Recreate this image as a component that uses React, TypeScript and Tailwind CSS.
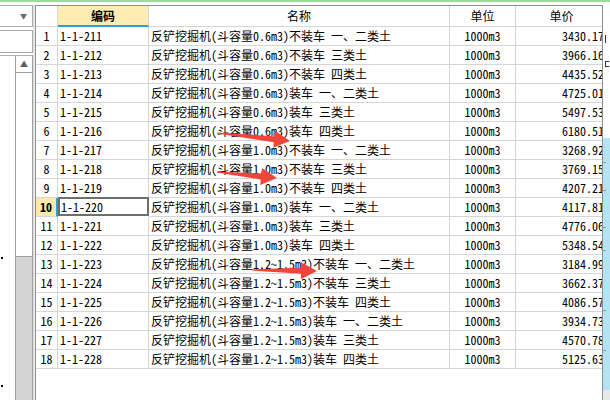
import React from 'react';

type Row = [string, string, string];

const rows: Row[] = [
  ['1-1-211', '反铲挖掘机(斗容量0.6m3)不装车 一、二类土', '3430.17'],
  ['1-1-212', '反铲挖掘机(斗容量0.6m3)不装车 三类土', '3966.16'],
  ['1-1-213', '反铲挖掘机(斗容量0.6m3)不装车 四类土', '4435.52'],
  ['1-1-214', '反铲挖掘机(斗容量0.6m3)装车 一、二类土', '4725.01'],
  ['1-1-215', '反铲挖掘机(斗容量0.6m3)装车 三类土', '5497.53'],
  ['1-1-216', '反铲挖掘机(斗容量0.6m3)装车 四类土', '6180.51'],
  ['1-1-217', '反铲挖掘机(斗容量1.0m3)不装车 一、二类土', '3268.92'],
  ['1-1-218', '反铲挖掘机(斗容量1.0m3)不装车 三类土', '3769.15'],
  ['1-1-219', '反铲挖掘机(斗容量1.0m3)不装车 四类土', '4207.21'],
  ['1-1-220', '反铲挖掘机(斗容量1.0m3)装车 一、二类土', '4117.81'],
  ['1-1-221', '反铲挖掘机(斗容量1.0m3)装车 三类土', '4776.06'],
  ['1-1-222', '反铲挖掘机(斗容量1.0m3)装车 四类土', '5348.54'],
  ['1-1-223', '反铲挖掘机(斗容量1.2~1.5m3)不装车 一、二类土', '3184.99'],
  ['1-1-224', '反铲挖掘机(斗容量1.2~1.5m3)不装车 三类土', '3662.37'],
  ['1-1-225', '反铲挖掘机(斗容量1.2~1.5m3)不装车 四类土', '4086.57'],
  ['1-1-226', '反铲挖掘机(斗容量1.2~1.5m3)装车 一、二类土', '3934.73'],
  ['1-1-227', '反铲挖掘机(斗容量1.2~1.5m3)装车 三类土', '4570.78'],
  ['1-1-228', '反铲挖掘机(斗容量1.2~1.5m3)装车 四类土', '5125.63'],
];

// red annotation arrow, tail -> tip
const arrow = (tx: number, ty: number, px: number, py: number) => {
  const dx = px - tx;
  const dy = py - ty;
  const len = Math.hypot(dx, dy);
  const ux = dx / len;
  const uy = dy / len;
  const nx = -uy;
  const ny = ux;
  const bx = px - ux * 16;
  const by = py - uy * 16;
  const p = (x: number, y: number) => `${x.toFixed(1)},${y.toFixed(1)}`;
  return [
    p(tx + nx * 0.6, ty + ny * 0.6),
    p(bx + nx * 3, by + ny * 3),
    p(bx + nx * 8.5, by + ny * 8.5),
    p(px, py),
    p(bx - nx * 8.5, by - ny * 8.5),
    p(bx - nx * 3, by - ny * 3),
    p(tx - nx * 0.6, ty - ny * 0.6),
  ].join(' ');
};

const cell = 'h-[19px] border-r border-b border-[#d6d6d6] flex items-center whitespace-nowrap overflow-hidden';

export default function App() {
  return (
    <div className="relative w-[610px] h-[400px] overflow-hidden bg-white text-[12px] leading-none text-black font-['Noto_Sans_Mono_CJK_SC','Noto_Sans_CJK_SC','Liberation_Mono',monospace]">
      <div className="h-[2px] bg-[#9ddc98]" />
      <div className="flex h-[398px] pt-[3px]">
        {/* left panel */}
        <div className="w-[33px] flex flex-col shrink-0">
          <div className="h-[22px] -ml-px border border-[#acacac] flex items-center justify-end pr-[5px]">
            <span className="text-[7px] text-[#6a6a6a]">▼</span>
          </div>
          <div className="h-[23px] mt-[3px] -ml-px border border-[#acacac]" />
          <div className="flex-1 mt-[2px] border-t border-[#acacac] flex">
            <div className="w-[15px] flex flex-col">
              <div className="h-[201px]" />
              <div className="ml-px w-[2px] h-[2px] bg-black" />
              <div className="h-[126px]" />
              <div className="ml-px w-[2px] h-[2px] bg-black" />
            </div>
            <div className="w-[18px] border-l border-r border-[#a0a0a0] flex flex-col">
              <div className="h-[17px] border-b border-[#a0a0a0] flex items-center justify-center">
                <span className="text-[8px] text-[#606060]">▲</span>
              </div>
              <div className="h-[184px] border-b border-[#a0a0a0] bg-white" />
              <div className="flex-1 bg-[#d4d4d4]" />
            </div>
          </div>
        </div>
        {/* splitter */}
        <div className="w-[2px] bg-[#f0f0f0] border-l border-[#dcdcdc] shrink-0" />
        {/* grid */}
        <div className="w-[568px] shrink-0 border-l border-t border-r border-[#8e8e8e] overflow-hidden">
          <div className="grid grid-cols-[22px_91px_301px_66px_92px] w-[572px]">
            <div className="h-[21px] border-r border-b border-[#d6d6d6]" />
            <div className="h-[21px] border-r border-b-2 border-r-[#d6d6d6] border-b-[#2aa1d8] bg-[#fdedb3] flex items-center justify-center font-bold">编码</div>
            <div className="h-[21px] border-r border-b border-[#d6d6d6] flex items-center justify-center">名称</div>
            <div className="h-[21px] border-r border-b border-[#d6d6d6] flex items-center justify-center">单位</div>
            <div className="h-[21px] border-r border-b border-[#d6d6d6] flex items-center justify-center">单价</div>
            {rows.map(([code, name, price], i) => {
              const sel = i === 9;
              return (
                <React.Fragment key={code}>
                  <div
                    className={
                      sel
                        ? 'h-[19px] border-r-2 border-b border-r-[#2aa1d8] border-b-[#d6d6d6] bg-[#fde9a8] flex items-center justify-center font-bold'
                        : `${cell} justify-center`
                    }
                  >
                    {i + 1}
                  </div>
                  <div
                    className={
                      sel
                        ? 'h-[19px] -mt-px border-2 border-[#6e6e6e] flex items-center pl-[1px] whitespace-nowrap'
                        : `${cell} pl-[2px]`
                    }
                  >
                    {code}
                  </div>
                  <div className={`${cell} pl-[2px]`}>{name}</div>
                  <div className={`${cell} justify-center`}>1000m3</div>
                  <div className={`${cell} justify-end pr-[3px]`}>{price}</div>
                </React.Fragment>
              );
            })}
          </div>
        </div>
        {/* right edge strip */}
        <div className="flex-1 flex flex-col">
          <div className="h-[133px] bg-white flex flex-col pl-[2px] text-[#333]">
            <div className="h-[30px]" />
            <div className="w-px h-[8px] bg-[#333]" />
            <div className="h-[18px]" />
            <div className="w-[4px] h-[6px] border-l border-t border-b border-[#333]" />
          </div>
          <div className="flex-1 bg-[#b4e4f4] flex flex-col">
            <div className="h-[24px]" />
            <div className="w-[3px] h-px bg-[#8a9aa0]" />
            <div className="h-[27px]" />
            <div className="w-[3px] h-px bg-[#8a9aa0]" />
            <div className="h-[36px]" />
            <div className="w-[3px] h-px bg-[#8a9aa0]" />
            <div className="h-[22px]" />
            <div className="w-[3px] h-px bg-[#8a9aa0]" />
            <div className="h-[59px]" />
            <div className="w-[3px] h-px bg-[#8a9aa0]" />
            <div className="h-[39px]" />
            <div className="w-[3px] h-px bg-[#8a9aa0]" />
          </div>
          <div className="h-[10px] bg-[#e8e8e8]" />
        </div>
      </div>
      {/* annotation arrows */}
      <svg className="absolute inset-0 pointer-events-none" width="610" height="400">
        <polygon points={arrow(217, 133, 290, 141)} fill="#f2453a" />
        <polygon points={arrow(217, 172, 277, 178)} fill="#f2453a" />
        <polygon points={arrow(252, 270, 317, 271)} fill="#f2453a" />
      </svg>
    </div>
  );
}
